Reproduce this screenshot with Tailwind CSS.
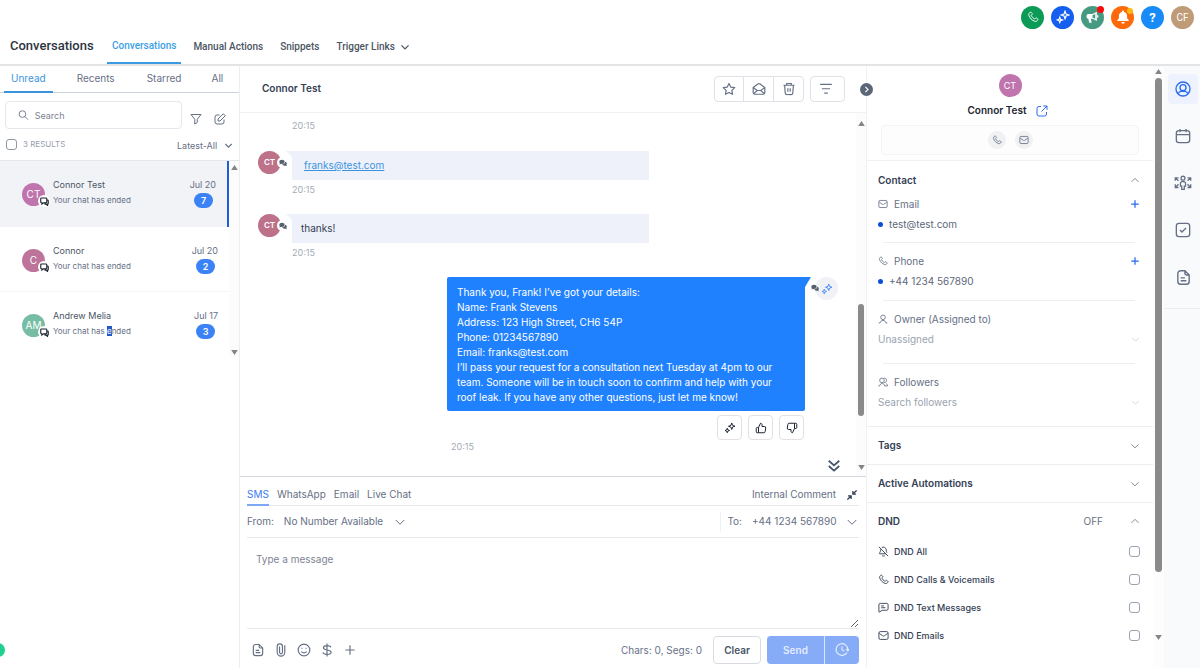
<!DOCTYPE html>
<html lang="en">
  <head>
    <meta charset="UTF-8" />
    <meta name="viewport" content="width=device-width, initial-scale=1.0" />
    <title>Conversations</title>
    <script src="https://cdn.jsdelivr.net/npm/@tailwindcss/browser@4"></script>
  </head>
  <body class="h-screen flex flex-col overflow-hidden bg-white font-['Inter',sans-serif] text-[10px] leading-[15px] text-[#667085]">
    <!-- icon sprite -->
    <svg class="hidden">
      <symbol id="chev-down" viewBox="0 0 24 24"><path d="M3.500 8l8.500 8.500L20.500 8" /></symbol>
      <symbol id="chev-up" viewBox="0 0 24 24"><path d="M3.500 16.500L12 8l8.500 8.500" /></symbol>
      <symbol id="phone" viewBox="0 0 24 24"><path d="M8.400 8.900c.7 1.400 1.600 2.800 2.800 4s2.500 2.100 4 2.800c.2 0 .3.100.5 0 .4 0 .7-.5 1-.8.600-.6.900-.9 1.300-1 .4-.2.900-.2 1.300 0 .3.100.6.400 1.200 1l.2.200c.6.600 1 1 1.100 1.300.2.400.2.900 0 1.300-.1.400-.5.700-1.100 1.300-.7.700-1 1-1.500 1.300-.5.300-1.300.5-1.900.5-.6 0-1 0-1.800-.3a19 19 0 0 1-7.200-4.500A19 19 0 0 1 3.800 8.800C3.500 8 3.500 7.600 3.500 7c0-.6.200-1.400.5-1.900.2-.5.600-.8 1.300-1.500.6-.6.900-1 1.300-1.100.4-.2.800-.2 1.300 0 .3.100.7.500 1.300 1.100l.2.200c.6.600.9.900 1 1.200.2.400.2.900 0 1.300-.1.400-.4.700-1 1.300-.4.400-.6.600-.7.800-.2.200-.3.400-.3.500z" /></symbol>
      <symbol id="mail" viewBox="0 0 24 24"><rect x="2" y="3.500" width="20" height="17" rx="3" /><path d="M3 7.500l7 5c.8.600 1.200.8 2 .8s1.200-.2 2-.8l7-5" /></symbol>
      <symbol id="sparkles" viewBox="0 0 24 24"><path d="M15.500 2l1.700 4.800L22 8.500l-4.800 1.700L15.500 15l-1.700-4.800L9 8.500l4.800-1.700zM6.500 12.500l1.200 3.300L11 17l-3.300 1.200L6.500 21.500l-1.200-3.300L2 17l3.300-1.200z" /></symbol>
      <symbol id="chats" viewBox="0 0 24 24"><path d="M4 2.500h12a2 2 0 0 1 2 2v9a2 2 0 0 1-2 2H9l-4 3.500v-3.500H4a2 2 0 0 1-2-2v-9a2 2 0 0 1 2-2zM18 8h2a2 2 0 0 1 2 2v7a2 2 0 0 1-2 2v3.500L16 19h-4" /></symbol>
      <symbol id="bubbles" viewBox="0 0 24 24"><ellipse cx="9" cy="8.500" rx="8" ry="6.500" /><path d="M3 11l-1.500 5.500L8 14zM18.500 8.500c3 1 5 3 5 5.500 0 1.500-.6 2.600-1.500 3.600l1.300 3.900-4.300-1.600c-4 1-8.500-.5-9.800-3.200 5-.2 9.300-3.200 9.300-8.200z" /></symbol>
      <symbol id="file" viewBox="0 0 24 24"><path d="M14 2.500H8A4 4 0 0 0 4 6.500v11a4 4 0 0 0 4 4h8a4 4 0 0 0 4-4v-9zM14 2.500v4a2 2 0 0 0 2 2h4M8 12.500h6M8 16.500h8" /></symbol>
      <symbol id="thumb" viewBox="0 0 24 24"><path d="M7 21.500V11l4-8.500c1.700 0 3 1.300 3 3V9h4.700a2.700 2.700 0 0 1 2.700 3.100l-1.100 7a2.700 2.700 0 0 1-2.700 2.400zM7 11H4.500a2 2 0 0 0-2 2v6.500a2 2 0 0 0 2 2H7" /></symbol>
      <symbol id="tri-up" viewBox="0 0 8 6"><path d="M4 0l4 6H0z" /></symbol>
      <symbol id="tri-down" viewBox="0 0 8 6"><path d="M0 0h8L4 6z" /></symbol>
    </svg>

    <!-- top bar -->
    <header class="shrink-0 border-b-2 border-[#e3e4e6] font-['Roboto',sans-serif]">
      <div class="h-9 flex items-center justify-end gap-[7px] pr-[6px] pb-[2px] text-white">
        <button aria-label="Call" class="size-[23px] rounded-full bg-[#0b9b57] flex items-center justify-center">
          <svg class="size-3 fill-none stroke-current stroke-2"><use href="#phone" /></svg>
        </button>
        <button aria-label="Ask AI" class="size-[23px] rounded-full bg-[#155eef] flex items-center justify-center">
          <svg class="size-[14px] fill-none stroke-current stroke-2"><use href="#sparkles" /></svg>
        </button>
        <button aria-label="Announcements" class="relative size-[23px] rounded-full bg-[#469a82] flex items-center justify-center">
          <svg viewBox="0 0 24 24" class="size-[13px] fill-current"><path d="M20 1.500v17l-8-4H9l1.500 7H6l-1.800-7A3.500 3.500 0 0 1 1 11V9a3.500 3.500 0 0 1 3.500-3.500H12zM12 8v4l5 2.500v-9zM20.500 7.500a2.500 2.500 0 0 1 0 5z" fill-rule="evenodd" /></svg>
          <span class="absolute top-0 right-0 size-[7px] rounded-full bg-[#ff0a0a]"></span>
        </button>
        <button aria-label="Notifications" class="relative size-[23px] rounded-full bg-[#fd6a09] flex items-center justify-center">
          <svg viewBox="0 0 24 24" class="size-[14px] fill-current"><path d="M12 1a1.800 1.800 0 0 0-1.800 1.800v.5C6.800 4.100 5 6.700 5 10v4l-3 4v1h20v-1l-3-4v-4c0-3.300-1.800-5.900-5.200-6.700v-.5A1.800 1.800 0 0 0 12 1zM9 20.500a3 3 0 0 0 6 0z" /></svg>
          <span class="absolute top-[2px] right-[1px] size-[6px] rounded-full bg-[#fdb813]"></span>
        </button>
        <button aria-label="Help" class="size-[23px] rounded-full bg-[#188bf6] text-[13px] font-bold">?</button>
        <button aria-label="Account" class="size-[23px] rounded-full bg-[#bf9b77] text-[10px]">CF</button>
      </div>
      <div class="h-[28px] flex items-stretch text-[10px] font-medium text-[#4b5563]">
        <h1 class="w-[97px] pl-[10px] flex items-center pb-[9px] text-[13px] text-[#2d3440]">Conversations</h1>
        <nav class="flex items-stretch ml-[10px]">
          <a href="#" class="px-[5px] flex items-center pb-2 border-b-2 border-[#3b9be0] text-[#3b9fe6]">Conversations</a>
          <a href="#" class="ml-3 flex items-center pb-[7px]">Manual Actions</a>
          <a href="#" class="ml-[17px] flex items-center pb-[7px]">Snippets</a>
          <a href="#" class="ml-[17px] flex items-center gap-[5px] pb-[7px]">Trigger Links
            <svg class="size-[10px] fill-none stroke-current stroke-3"><use href="#chev-down" /></svg>
          </a>
        </nav>
      </div>
    </header>

    <div class="flex-1 min-h-0 flex">
      <!-- conversation list -->
      <aside class="w-60 shrink-0 border-r border-[#eceef1]">
        <nav class="h-[27px] flex border-b border-[#cbd2dc] pl-[4px]">
          <a href="#" class="px-[7px] -mb-px border-b-2 border-[#3b93dd] pt-[5px] text-[#3b93dd]">Unread</a>
          <a href="#" class="ml-6 pt-[5px]">Recents</a>
          <a href="#" class="ml-8 pt-[5px]">Starred</a>
          <a href="#" class="ml-[30px] pt-[5px]">All</a>
        </nav>
        <div class="flex items-end gap-3 pl-[5px] pt-2">
          <label class="h-7 w-[177px] flex items-center gap-[6px] px-3 border border-[#e4e7ec] rounded">
            <svg viewBox="0 0 24 24" class="size-3 fill-none stroke-current stroke-2"><circle cx="10" cy="10" r="7.500" /><path d="M15.500 15.500l7 7" /></svg>
            <input type="text" aria-label="Search" placeholder="Search" class="w-full text-[9px] outline-none placeholder:text-[#7c8492]" />
          </label>
          <button aria-label="Filter" class="-ml-1"><svg viewBox="0 0 24 24" class="size-3 mb-1 fill-none stroke-current stroke-2"><path d="M2 3h20l-7.500 9.500V19l-5 3v-9.500z" stroke-linejoin="round" /></svg></button>
          <button aria-label="New conversation"><svg viewBox="0 0 24 24" class="size-3 mb-1 fill-none stroke-current stroke-2"><path d="M11 4H6a4 4 0 0 0-4 4v10a4 4 0 0 0 4 4h10a4 4 0 0 0 4-4v-5M8 16v-4L18.500 1.500l4 4L12 16z" /></svg></button>
        </div>
        <div class="h-[31px] flex items-center justify-between pl-[6px] pr-[6px] text-[9px]">
          <label class="flex items-center gap-[6px] text-[8px] text-[#98a1ae]">
            <input type="checkbox" class="appearance-none size-[11px] border border-[#8f97a3] rounded-[3px]" />3 RESULTS
          </label>
          <div class="flex items-center pt-[2px]">
            <select aria-label="Sort" class="appearance-none w-[47px] outline-none"><option>Latest-All</option></select>
            <svg class="size-[9px] fill-none stroke-current stroke-3"><use href="#chev-down" /></svg>
          </div>
        </div>

        <div class="flex border-t border-[#e4e7ec]">
          <ul class="flex-1 text-[9px]">
            <li class="h-[66px] flex items-start pt-4 pl-[22px] pr-[11px] bg-[#f1f3f7] border-r-2 border-[#1f5fd6]">
              <div class="relative mt-[6px] size-[23px] rounded-full bg-[#c074ae] text-white text-[10px] flex items-center justify-center">CT
                <span class="absolute left-4 top-3 size-[12px] rounded-full bg-white flex items-center justify-center"><svg class="size-[9px] fill-none stroke-[#1d2430] stroke-3"><use href="#chats" /></svg></span>
              </div>
              <div class="flex-1 ml-2"><p class="text-[#4b5565]">Connor Test</p><p class="mt-px text-[8px]">Your chat has ended</p></div>
              <div class="flex flex-col items-end"><span>Jul 20</span><span class="mt-[1px] mr-[3px] w-[19px] rounded-full bg-[#3b82f6] text-center text-white font-semibold">7</span></div>
            </li>
            <li class="h-[65px] flex items-start pt-4 pl-[22px] pr-[11px] border-b border-[#f5f6f8]">
              <div class="relative mt-[6px] size-[23px] rounded-full bg-[#bd739a] text-white text-[10px] flex items-center justify-center">C
                <span class="absolute left-4 top-3 size-[12px] rounded-full bg-white flex items-center justify-center"><svg class="size-[9px] fill-none stroke-[#1d2430] stroke-3"><use href="#chats" /></svg></span>
              </div>
              <div class="flex-1 ml-2"><p class="text-[#4b5565]">Connor</p><p class="mt-px text-[8px]">Your chat has ended</p></div>
              <div class="flex flex-col items-end"><span>Jul 20</span><span class="mt-[1px] mr-[3px] w-[19px] rounded-full bg-[#3b82f6] text-center text-white font-semibold">2</span></div>
            </li>
            <li class="h-[65px] flex items-start pt-4 pl-[22px] pr-[11px]">
              <div class="relative mt-[6px] size-[23px] rounded-full bg-[#76bda4] text-white text-[10px] flex items-center justify-center">AM
                <span class="absolute left-4 top-3 size-[12px] rounded-full bg-white flex items-center justify-center"><svg class="size-[9px] fill-none stroke-[#1d2430] stroke-3"><use href="#chats" /></svg></span>
              </div>
              <div class="flex-1 ml-2"><p class="text-[#4b5565]">Andrew Melia</p><p class="mt-px text-[8px]">Your chat has <span class="bg-[#2358c8] text-white">e</span>nded</p></div>
              <div class="flex flex-col items-end"><span>Jul 17</span><span class="mt-[1px] mr-[3px] w-[19px] rounded-full bg-[#3b82f6] text-center text-white font-semibold">3</span></div>
            </li>
          </ul>
          <div class="w-[10px] bg-[#fcfcfc] flex flex-col items-center justify-between pt-1 pb-[2px]">
            <svg class="w-[7px] h-[5px] fill-[#858585]"><use href="#tri-up" /></svg>
            <svg class="w-[7px] h-[5px] fill-[#858585]"><use href="#tri-down" /></svg>
          </div>
        </div>
      </aside>

      <!-- thread -->
      <main class="flex-1 min-w-0 flex flex-col">
        <div class="h-[47px] shrink-0 flex items-center pl-[22px] pr-[21px] border-b border-[#f0f1f3]">
          <h2 class="flex-1 pb-[2px] font-semibold text-[#344054]">Connor Test</h2>
          <div class="h-[26px] flex border border-[#dfe2e7] rounded divide-x divide-[#dfe2e7]">
            <button aria-label="Star" class="w-[29px] flex items-center justify-center"><svg viewBox="0 0 24 24" class="size-[14px] fill-none stroke-current stroke-2"><path d="M12 2.500l3 6.200 6.800 1-4.900 4.700 1.200 6.700-6.100-3.200-6.100 3.200 1.200-6.700-4.900-4.700 6.800-1z" stroke-linejoin="round" /></svg></button>
            <button aria-label="Mark as read" class="w-[30px] flex items-center justify-center"><svg viewBox="0 0 24 24" class="size-[14px] fill-none stroke-current stroke-2"><path d="M2 9.500l8-6c1.300-1 2.700-1 4 0l8 6V18a3 3 0 0 1-3 3H5a3 3 0 0 1-3-3zM2 9.500l7 5h6l7-5M3 20l6-5.500M21 20l-6-5.500" /></svg></button>
            <button aria-label="Delete" class="w-[29px] flex items-center justify-center"><svg viewBox="0 0 24 24" class="size-[14px] fill-none stroke-current stroke-2"><path d="M2.500 5.500h19M8 5V2.500h8V5M4.500 5.500l1 13.500a3 3 0 0 0 3 2.500h7a3 3 0 0 0 3-2.500l1-13.500M10 10.500v6M14 10.500v6" /></svg></button>
          </div>
          <button aria-label="Filter thread" class="ml-[6px] w-[35px] h-[26px] flex items-center justify-center pr-[3px] border border-[#dfe2e7] rounded"><svg viewBox="0 0 24 24" class="size-[14px] fill-none stroke-current stroke-2"><path d="M2 4h20M5 11.500h14M9 19h6" /></svg></button>
        </div>

        <div class="flex-1 min-h-0 flex">
          <div class="relative flex-1 min-w-0 pt-[5px] pl-[18px] text-[#475467]">
            <time class="block ml-[34px] text-[9px] text-[#a3a9b4]">20:15</time>
            <div class="mt-[18px] flex">
              <div class="relative size-[23px] rounded-full bg-[#bd7289] text-white text-[8px] font-semibold flex items-center justify-center">CT
                <span class="absolute left-[19px] top-[6px] size-[11px] rounded-full bg-white flex items-center justify-center"><svg class="size-2 fill-[#56616f]"><use href="#bubbles" /></svg></span>
              </div>
              <div class="relative ml-[11px] w-[357px] h-[29px] flex items-center pl-3 bg-[#eef1fa]">
                <svg viewBox="0 0 8 10" class="absolute -left-[7px] top-0 w-2 h-[10px] fill-[#eef1fa]"><path d="M0 0h8v10C7 5 4 2 0 0z" /></svg>
                <a href="#" class="underline text-[#3b93dd]">franks@test.com</a>
              </div>
            </div>
            <time class="block mt-[2px] ml-[34px] text-[9px] text-[#a3a9b4]">20:15</time>
            <div class="mt-[17px] flex">
              <div class="relative size-[23px] rounded-full bg-[#bd7289] text-white text-[8px] font-semibold flex items-center justify-center">CT
                <span class="absolute left-[19px] top-[6px] size-[11px] rounded-full bg-white flex items-center justify-center"><svg class="size-2 fill-[#56616f]"><use href="#bubbles" /></svg></span>
              </div>
              <div class="relative ml-[11px] w-[357px] h-[29px] flex items-center pl-[9px] bg-[#eef1fa] text-[#344054]">
                <svg viewBox="0 0 8 10" class="absolute -left-[7px] top-0 w-2 h-[10px] fill-[#eef1fa]"><path d="M0 0h8v10C7 5 4 2 0 0z" /></svg>
                thanks!
              </div>
            </div>
            <time class="block mt-[2px] ml-[34px] text-[9px] text-[#a3a9b4]">20:15</time>

            <div class="mt-[17px] pr-[18px] flex justify-end">
              <div class="relative w-[358px] pt-2 pb-[6px] pl-[10px] pr-6 rounded-xs bg-[#2081ff] text-white">
                <svg viewBox="0 0 8 10" class="absolute -right-[6px] top-0 w-2 h-[10px] fill-[#2081ff]"><path d="M0 0h8L2 10H0z" /></svg>
                <p>Thank you, Frank! I’ve got your details:<br />Name: Frank Stevens<br />Address: 123 High Street, CH6 54P<br />Phone: 01234567890<br />Email: franks@test.com<br />I’ll pass your request for a consultation next Tuesday at 4pm to our team. Someone will be in touch soon to confirm and help with your roof leak. If you have any other questions, just let me know!</p>
              </div>
              <div class="relative ml-[10px] size-[23px] rounded-full bg-[#f0f2f6] flex items-center justify-center">
                <svg class="size-3 fill-none stroke-[#4f8df5] stroke-2"><use href="#sparkles" /></svg>
                <svg class="absolute -left-1 top-[7px] size-2 fill-[#56616f]"><use href="#bubbles" /></svg>
              </div>
            </div>
            <div class="mt-1 pr-[52px] flex justify-end gap-[6px] text-[#1d2430]">
              <button aria-label="Regenerate" class="size-[25px] flex items-center justify-center border border-[#e6e0e2] rounded"><svg class="size-3 fill-none stroke-current stroke-2"><use href="#sparkles" /></svg></button>
              <button aria-label="Good reply" class="size-[25px] flex items-center justify-center border border-[#e6e0e2] rounded"><svg class="size-3 fill-none stroke-current stroke-2"><use href="#thumb" /></svg></button>
              <button aria-label="Bad reply" class="size-[25px] flex items-center justify-center border border-[#e6e0e2] rounded"><svg class="size-3 rotate-180 fill-none stroke-current stroke-2"><use href="#thumb" /></svg></button>
            </div>
            <time class="block -mt-[1px] ml-[193px] text-[9px] text-[#a3a9b4]">20:15</time>
            <button aria-label="Jump to latest" class="absolute right-[15px] bottom-[3px]"><svg viewBox="0 0 24 24" class="size-[14px] fill-none stroke-[#475467] stroke-3"><path d="M3 3l9 8 9-8M3 12l9 8 9-8" /></svg></button>
          </div>
          <div class="w-[10px] bg-[#fcfcfc] flex flex-col items-center pt-2 pb-[6px]">
            <svg class="w-[7px] h-[5px] fill-[#858585]"><use href="#tri-up" /></svg>
            <div class="mt-[178px] w-[6px] h-28 rounded-full bg-[#8a8a8a]"></div>
            <svg class="mt-auto w-[7px] h-[5px] fill-[#858585]"><use href="#tri-down" /></svg>
          </div>
        </div>

        <!-- composer -->
        <section class="shrink-0 border-t border-[#d5d9df] px-[7px]">
          <div class="h-[29px] flex items-stretch border-b border-[#e6e8ec]">
            <nav class="flex gap-2">
              <a href="#" class="pt-[10px] -mb-px border-b-2 border-[#7ba7f5] text-[#3b7cf0]">SMS</a>
              <a href="#" class="pt-[10px]">WhatsApp</a>
              <a href="#" class="pt-[10px]">Email</a>
              <a href="#" class="pt-[10px]">Live Chat</a>
            </nav>
            <a href="#" class="ml-auto pt-[10px]">Internal Comment</a>
            <button aria-label="Collapse" class="ml-[11px] mr-[2px] pt-[7px]"><svg viewBox="0 0 24 24" class="size-[10px] fill-none stroke-[#344054] stroke-3"><path d="M23 1l-8 8M14 2.500V10h7.500M1 23l8-8M10 21.500V14H2.500" /></svg></button>
          </div>
          <div class="h-8 flex items-center border-b border-[#e6e8ec]">
            <label for="from">From:</label>
            <select id="from" class="appearance-none ml-[10px] w-[110px] outline-none"><option>No Number Available</option></select>
            <svg class="size-3 fill-none stroke-current stroke-2"><use href="#chev-down" /></svg>
            <label for="to" class="ml-auto h-5 flex items-center pl-[6px] border-l border-[#eff0f3]">To:</label>
            <select id="to" class="appearance-none ml-[10px] w-[94px] outline-none"><option>+44 1234 567890</option></select>
            <svg class="mr-px size-3 fill-none stroke-current stroke-2"><use href="#chev-down" /></svg>
          </div>
          <textarea aria-label="Message" placeholder="Type a message" class="block w-full h-[90px] px-[9px] py-[14px] resize-y outline-none placeholder:text-[#7c8492]"></textarea>
          <div class="h-10 pt-[3px] flex items-center border-t border-[#e6e8ec]">
            <div class="flex items-center gap-[9px] pl-1">
              <button aria-label="Templates"><svg class="size-[14px] fill-none stroke-current stroke-2"><use href="#file" /></svg></button>
              <button aria-label="Attach"><svg viewBox="0 0 24 24" class="size-[14px] fill-none stroke-current stroke-2"><path d="M18.500 4v12a6.500 6.500 0 0 1-13 0V6a4.500 4.500 0 0 1 9 0v10a2.500 2.500 0 0 1-5 0V6" /></svg></button>
              <button aria-label="Emoji"><svg viewBox="0 0 24 24" class="size-[14px] fill-none stroke-current stroke-2"><circle cx="12" cy="12" r="10" /><path d="M7.500 14.500s1.500 2.500 4.500 2.500 4.500-2.500 4.500-2.500M8.500 8v2M15.500 8v2" /></svg></button>
              <button aria-label="Payment"><svg viewBox="0 0 24 24" class="size-[14px] fill-none stroke-current stroke-2"><path d="M18.500 7.500C18 5.500 16 4.500 12 4.500s-6 1.500-6 3.700c0 5.600 13 2 13 7.600 0 2.200-2.500 3.700-7 3.700s-6.500-1.500-7-3.500M12 1v22" /></svg></button>
              <button aria-label="More"><svg viewBox="0 0 24 24" class="size-[14px] fill-none stroke-current stroke-2"><path d="M12 4v16M4 12h16" /></svg></button>
            </div>
            <span class="ml-auto">Chars: 0, Segs: 0</span>
            <button class="ml-[11px] w-12 h-7 border border-[#d8dce2] rounded font-semibold text-[#475467]">Clear</button>
            <div class="ml-[6px] h-7 flex rounded bg-[#86abf7] text-[#e4edfe] divide-x divide-[#dbe6fd]">
              <button class="w-[58px] font-semibold">Send</button>
              <button aria-label="Schedule" class="w-[34px] flex items-center justify-center"><svg viewBox="0 0 24 24" class="size-[14px] fill-none stroke-current stroke-2"><path d="M20.500 16.500A10 10 0 1 1 22 11.500M19 10.500l3 3 2-3M12 6v6l4 2" /></svg></button>
            </div>
          </div>
        </section>
      </main>

      <!-- contact panel -->
      <aside class="relative w-[298px] shrink-0 flex border-l border-[#f0f1f3]">
        <button aria-label="Collapse panel" class="absolute -left-[7px] top-[17px] size-[13px] rounded-full bg-[#5b6679] text-white flex items-center justify-center"><svg viewBox="0 0 24 24" class="size-[9px] fill-none stroke-current stroke-3"><path d="M9 5l7 7-7 7" /></svg></button>
        <div class="flex-1 min-w-0">
          <div class="h-[95px] flex flex-col items-center pt-2 border-b border-[#f0f1f3]">
            <div class="size-[23px] rounded-full bg-[#c074ae] text-white text-[9px] flex items-center justify-center">CT</div>
            <div class="mt-[6px] pr-[5px] flex items-center gap-[9px] font-semibold text-[#1d2430]">Connor Test
              <a href="#" aria-label="Open contact"><svg viewBox="0 0 24 24" class="size-3 fill-none stroke-[#2a6bf0] stroke-2"><path d="M10 3H6a4 4 0 0 0-4 4v11a4 4 0 0 0 4 4h11a4 4 0 0 0 4-4v-4M14.500 2H22v7.500M22 2L11 13" /></svg></a>
            </div>
            <div class="mt-[7px] w-[258px] h-[30px] flex items-center justify-center gap-[9px] border border-[#f4f5f7] rounded bg-[#fdfdfe]">
              <button aria-label="Call contact" class="size-[18px] rounded-full bg-[#f0f1f3] flex items-center justify-center"><svg class="size-[10px] fill-none stroke-current stroke-2"><use href="#phone" /></svg></button>
              <button aria-label="Email contact" class="size-[18px] rounded-full bg-[#f0f1f3] flex items-center justify-center"><svg class="size-[10px] fill-none stroke-current stroke-2"><use href="#mail" /></svg></button>
            </div>
          </div>

          <section class="pt-[9px] pl-[11px] pr-[13px] border-b border-[#eceef1]">
            <button class="w-full h-5 flex items-center justify-between font-semibold text-[#344054]">Contact
              <svg class="size-[10px] fill-none stroke-[#667085] stroke-2"><use href="#chev-up" /></svg>
            </button>
            <div class="mt-1 pb-2">
              <div class="h-5 flex items-center gap-[6px]"><svg class="size-[10px] fill-none stroke-current stroke-2"><use href="#mail" /></svg>Email
                <button aria-label="Add email" class="ml-auto"><svg viewBox="0 0 24 24" class="size-[10px] fill-none stroke-[#2a6bf0] stroke-3"><path d="M12 3v18M3 12h18" /></svg></button>
              </div>
              <div class="h-5 flex items-center gap-[6px] text-[#5d6779]"><span class="size-[5px] rounded-full bg-[#0b4fd8]"></span>test@test.com</div>
            </div>
            <hr class="mx-[5px] border-[#eceef1]" />
            <div class="pt-2 pb-[9px]">
              <div class="h-5 flex items-center gap-[6px]"><svg class="size-[10px] fill-none stroke-current stroke-2"><use href="#phone" /></svg>Phone
                <button aria-label="Add phone" class="ml-auto"><svg viewBox="0 0 24 24" class="size-[10px] fill-none stroke-[#2a6bf0] stroke-3"><path d="M12 3v18M3 12h18" /></svg></button>
              </div>
              <div class="h-5 flex items-center gap-[6px] text-[#5d6779]"><span class="size-[5px] rounded-full bg-[#0b4fd8]"></span>+44 1234 567890</div>
            </div>
            <hr class="mx-[5px] border-[#eceef1]" />
            <div class="pt-2 pb-[14px]">
              <label for="owner" class="h-5 flex items-center gap-[6px]"><svg viewBox="0 0 24 24" class="size-[10px] fill-none stroke-current stroke-2"><circle cx="12" cy="8" r="5.500" /><path d="M1.500 21.500h3.500c1-4 3-6 7-6s6 2 7 6h3.500" /></svg>Owner (Assigned to)</label>
              <div class="h-5 flex items-center justify-between text-[#9aa3b0]">
                <select id="owner" class="appearance-none flex-1 outline-none"><option>Unassigned</option></select>
                <svg class="size-[9px] fill-none stroke-[#c3c8d0] stroke-2"><use href="#chev-down" /></svg>
              </div>
            </div>
            <hr class="mx-[5px] border-[#eceef1]" />
            <div class="pt-2 pb-[14px]">
              <label for="followers" class="h-5 flex items-center gap-[6px]"><svg viewBox="0 0 24 24" class="size-[10px] fill-none stroke-current stroke-2"><circle cx="9.500" cy="8" r="5.500" /><path d="M14 3c3.500-1.500 6.500 1.500 6.500 5s-3 6.500-6.500 5M1 21.500h3c1-4 2.500-6 6-6s5 2 6 6h7c-1-3.500-2-5-4-6" /></svg>Followers</label>
              <div class="h-5 flex items-center justify-between text-[#9aa3b0]">
                <input id="followers" type="text" placeholder="Search followers" class="flex-1 outline-none placeholder:text-[#9aa3b0]" />
                <svg class="size-[9px] fill-none stroke-[#c3c8d0] stroke-2"><use href="#chev-down" /></svg>
              </div>
            </div>
          </section>

          <button class="w-full h-[38px] pl-[11px] pr-[13px] flex items-center justify-between border-b border-[#eceef1] font-semibold text-[#344054]">Tags
            <svg class="size-[10px] fill-none stroke-[#667085] stroke-2"><use href="#chev-down" /></svg>
          </button>
          <button class="w-full h-[38px] pl-[11px] pr-[13px] flex items-center justify-between border-b border-[#eceef1] font-semibold text-[#344054]">Active Automations
            <svg class="size-[10px] fill-none stroke-[#667085] stroke-2"><use href="#chev-down" /></svg>
          </button>
          <section class="pl-[11px] pr-[13px] text-[#344054]">
            <button class="w-full h-[34px] pt-[2px] flex items-center font-semibold">DND
              <span class="ml-auto mr-[27px] font-normal text-[#667085]">OFF</span>
              <svg class="size-[10px] fill-none stroke-[#667085] stroke-2"><use href="#chev-up" /></svg>
            </button>
            <div class="text-[9px] font-medium">
              <label class="h-[28px] flex items-center gap-[5px]"><svg viewBox="0 0 24 24" class="size-[11px] fill-none stroke-current stroke-2"><path d="M2 2l20 20M8 3.500c4-2.500 10 0 10 5 0 3 .5 4.500 1.500 6M6 7c-.3 5-1.500 6.500-3 8.500-.5.700 0 1.500 1 1.500h13M9 21c1.800 1.400 4.200 1.400 6 0" /></svg>DND All
                <input type="checkbox" class="ml-auto appearance-none size-[11px] border border-[#9aa3b0] rounded-[3px]" /></label>
              <label class="h-[28px] flex items-center gap-[5px]"><svg class="size-[11px] fill-none stroke-current stroke-2"><use href="#phone" /></svg>DND Calls &amp; Voicemails
                <input type="checkbox" class="ml-auto appearance-none size-[11px] border border-[#9aa3b0] rounded-[3px]" /></label>
              <label class="h-[28px] flex items-center gap-[5px]"><svg viewBox="0 0 24 24" class="size-[11px] fill-none stroke-current stroke-2"><path d="M5 3h14a3 3 0 0 1 3 3v9a3 3 0 0 1-3 3H9l-6 4c-.6.300-1 0-1-.6V6a3 3 0 0 1 3-3zM7 8.500h6M7 12.500h9" /></svg>DND Text Messages
                <input type="checkbox" class="ml-auto appearance-none size-[11px] border border-[#9aa3b0] rounded-[3px]" /></label>
              <label class="h-[28px] flex items-center gap-[5px]"><svg class="size-[11px] fill-none stroke-current stroke-2"><use href="#mail" /></svg>DND Emails
                <input type="checkbox" class="ml-auto appearance-none size-[11px] border border-[#9aa3b0] rounded-[3px]" /></label>
            </div>
          </section>
        </div>
        <div class="w-[11px] pr-px flex flex-col items-center pt-[3px] pb-7 bg-[#fdfdfd]">
          <svg class="w-[7px] h-[5px] fill-[#858585]"><use href="#tri-up" /></svg>
          <div class="mt-1 w-[7px] h-[494px] rounded-full bg-[#8a8a8a]"></div>
          <svg class="mt-auto w-[7px] h-[5px] fill-[#858585]"><use href="#tri-down" /></svg>
        </div>
      </aside>

      <!-- right rail -->
      <nav class="w-9 shrink-0 bg-[#f9fafb]">
        <div class="h-[243px] pt-2 pl-1 flex flex-col gap-[17px] border-b border-[#eceef1]">
          <a href="#" aria-label="Contact" class="size-[30px] rounded flex items-center justify-center bg-[#edf2fe] text-[#2a6bf0]"><svg viewBox="0 0 24 24" class="size-4 fill-none stroke-current stroke-2"><circle cx="12" cy="12" r="10.500" /><circle cx="12" cy="10" r="4.500" /><path d="M4.500 19c1-2.500 3-3.500 5-3.500h5c2 0 4 1 5 3.500" /></svg></a>
          <a href="#" aria-label="Appointments" class="size-[30px] flex items-center justify-center"><svg viewBox="0 0 24 24" class="size-4 fill-none stroke-current stroke-2"><rect x="2" y="4" width="20" height="18" rx="4" /><path d="M2 10h20M7.500 1.500v5M16.500 1.500v5" /></svg></a>
          <a href="#" aria-label="Opportunities" class="size-[30px] flex items-center justify-center"><svg viewBox="0 0 28 24" class="w-[18px] h-4 fill-none stroke-current stroke-2"><circle cx="14" cy="4.500" r="3" /><path d="M12 22v-5h-2v-4a3 3 0 0 1 3-3h2a3 3 0 0 1 3 3v4h-2v5zM2 8.500V4h5M2 4l5 4.500M26 8.500V4h-5M26 4l-5 4.500M2 14v5h5M2 19l5-5M26 14v5h-5M26 19l-5-5" /></svg></a>
          <a href="#" aria-label="Tasks" class="size-[30px] flex items-center justify-center"><svg viewBox="0 0 24 24" class="size-4 fill-none stroke-current stroke-2"><rect x="2" y="2" width="20" height="20" rx="4" /><path d="M7.500 12l3 3 6-6" /></svg></a>
          <a href="#" aria-label="Documents" class="size-[30px] flex items-center justify-center"><svg class="size-[17px] fill-none stroke-current stroke-2"><use href="#file" /></svg></a>
        </div>
      </nav>
    </div>

    <button aria-label="Chat widget" class="absolute -left-[9px] bottom-[11px] size-[14px] rounded-full bg-[#1fcf8f]"></button>
  </body>
</html>
